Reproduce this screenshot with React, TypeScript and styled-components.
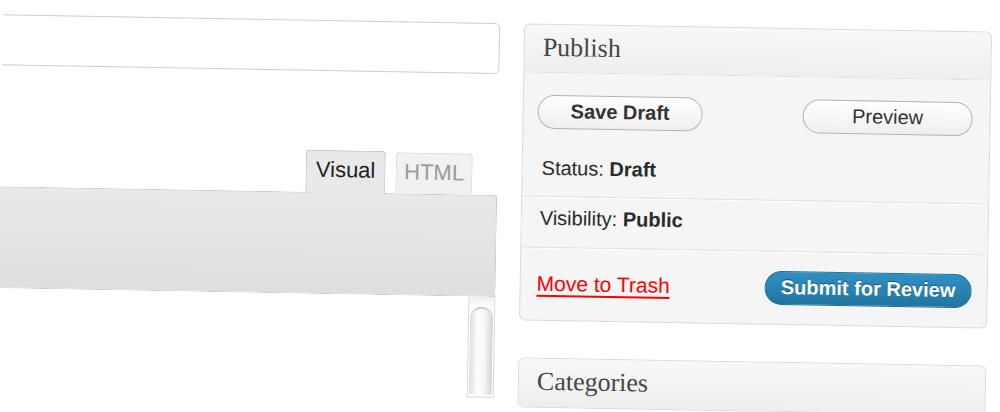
import React from 'react';
import styled, { createGlobalStyle } from 'styled-components';

const GlobalStyle = createGlobalStyle`
  html, body {
    margin: 0;
    padding: 0;
    background: #fff;
    overflow: hidden;
  }
  body {
    font-family: "Liberation Sans", Arial, sans-serif;
    color: #333;
  }
`;

const Page = styled.div`
  width: 1000px;
  height: 412px;
  overflow: hidden;
  background: #fff;
  display: flex;
  align-items: flex-start;
  gap: 24px;
  transform: rotate(1deg);
  transform-origin: 500px 206px;
`;

const EditorColumn = styled.div`
  flex-shrink: 0;
  width: 527px;
  margin-left: -30px;
  display: flex;
  flex-direction: column;
`;

const TitleInput = styled.div`
  margin-top: 23px;
  height: 51px;
  box-sizing: border-box;
  border: 1px solid #cdcdcd;
  border-radius: 5px;
  background: #fff;
`;

const TabRow = styled.div`
  position: relative;
  z-index: 1;
  margin-top: 79px;
  margin-bottom: -1px;
  height: 43px;
  padding-right: 25px;
  display: flex;
  justify-content: flex-end;
  align-items: flex-end;
  gap: 10px;
`;

const Tab = styled.div<{ $active?: boolean }>`
  box-sizing: border-box;
  width: ${(p) => (p.$active ? '80px' : '77px')};
  height: ${(p) => (p.$active ? '43px' : '41px')};
  margin-bottom: ${(p) => (p.$active ? '0' : '1px')};
  border: 1px solid ${(p) => (p.$active ? '#c6c6c6' : '#dadada')};
  border-bottom: none;
  border-radius: 4px 4px 0 0;
  background: ${(p) => (p.$active ? '#e9e9e9' : '#f1f1f1')};
  color: ${(p) => (p.$active ? '#222' : '#9a9a9a')};
  font-size: 22px;
  line-height: 38px;
  text-align: center;
`;

const Toolbar = styled.div`
  height: 102px;
  box-sizing: border-box;
  border: 1px solid #c9c9c9;
  border-left: none;
  border-radius: 0 4px 0 0;
  background: linear-gradient(#e9e9e9, #dedede);
`;

const EditorBody = styled.div`
  display: flex;
  justify-content: flex-end;
  height: 115px;
  background: #fff;
`;

const ScrollTrack = styled.div`
  width: 27px;
  height: 101px;
  box-sizing: border-box;
  border-left: 1px solid #dadada;
  border-right: 1px solid #dadada;
  border-bottom: 1px dotted #c8c8c8;
  padding: 10px 1px 2px;
  background: linear-gradient(#ececec, #fff 10px);
  display: flex;
`;

const ScrollThumb = styled.div`
  flex: 1;
  border-radius: 12px 12px 2px 2px;
  border-top: 2px solid #c9c9c9;
  background: linear-gradient(90deg, #dedede, #fdfdfd 35%, #f6f6f6 65%, #d4d4d4);
`;

const SideColumn = styled.div`
  flex-shrink: 0;
  width: 468px;
  display: flex;
  flex-direction: column;
`;

const Box = styled.div<{ $gap: number }>`
  margin-top: ${(p) => p.$gap}px;
  border: 1px solid #dadada;
  border-radius: 6px;
  background: #f5f5f5;
`;

const BoxTitle = styled.div<{ $divided?: boolean }>`
  height: 48px;
  box-sizing: border-box;
  padding: 10px 0 0 18px;
  border-bottom: ${(p) => (p.$divided ? '1px solid #dfdfdf' : 'none')};
  border-radius: 6px 6px 0 0;
  background: linear-gradient(#f8f8f8, #eeeeee);
  font-family: "Liberation Serif", Georgia, serif;
  font-size: 26px;
  line-height: 26px;
  color: #464646;
`;

const ButtonRow = styled.div`
  display: flex;
  justify-content: space-between;
  padding: 22px 17px 0 14px;
`;

const PillButton = styled.div<{ $width: number; $bold?: boolean }>`
  width: ${(p) => p.$width}px;
  height: 34px;
  box-sizing: border-box;
  border: 1px solid #b4b4b4;
  border-radius: 17px;
  background: linear-gradient(#ffffff, #efefef);
  font-size: 20px;
  font-weight: ${(p) => (p.$bold ? 700 : 400)};
  line-height: 31px;
  text-align: center;
  color: #333;
`;

const InfoRow = styled.div<{ $top: number; $bottom: number; $left: number; $divided?: boolean }>`
  padding: ${(p) => `${p.$top}px 0 ${p.$bottom}px ${p.$left}px`};
  font-size: 20px;
  line-height: 24px;
  color: #2a2a2a;
  border-bottom: ${(p) => (p.$divided ? '1px solid #e1e1e1' : 'none')};
  box-shadow: ${(p) => (p.$divided ? '0 1px 0 #fff' : 'none')};

  b {
    font-weight: 700;
  }
`;

const ActionRow = styled.div`
  display: flex;
  justify-content: space-between;
  align-items: center;
  padding: 19px 15px 19px 16px;
`;

const TrashLink = styled.span`
  color: #ff0000;
  font-size: 21px;
  line-height: 24px;
  text-decoration: underline;
  text-decoration-thickness: 2px;
  text-underline-offset: 4px;
`;

const SubmitButton = styled.div`
  width: 207px;
  height: 34px;
  box-sizing: border-box;
  border: 1px solid #1f6f97;
  border-radius: 17px;
  background: linear-gradient(#3090c4, #21759f);
  color: #fff;
  font-size: 20px;
  font-weight: 700;
  line-height: 31px;
  text-align: center;
  text-shadow: 0 -1px 0 rgba(0, 0, 0, 0.45);
`;

const App: React.FC = () => {
  return (
    <>
      <GlobalStyle />
      <Page>
        <EditorColumn>
          <TitleInput />
          <TabRow>
            <Tab $active>Visual</Tab>
            <Tab>HTML</Tab>
          </TabRow>
          <Toolbar />
          <EditorBody>
            <ScrollTrack>
              <ScrollThumb />
            </ScrollTrack>
          </EditorBody>
        </EditorColumn>

        <SideColumn>
          <Box $gap={23}>
            <BoxTitle $divided>Publish</BoxTitle>
            <ButtonRow>
              <PillButton $width={165} $bold>Save Draft</PillButton>
              <PillButton $width={170}>Preview</PillButton>
            </ButtonRow>
            <InfoRow $top={27} $bottom={16} $left={19} $divided>
              Status: <b>Draft</b>
            </InfoRow>
            <InfoRow $top={9} $bottom={17} $left={18} $divided>
              Visibility: <b>Public</b>
            </InfoRow>
            <ActionRow>
              <TrashLink>Move to Trash</TrashLink>
              <SubmitButton>Submit for Review</SubmitButton>
            </ActionRow>
          </Box>

          <Box $gap={37}>
            <BoxTitle>Categories</BoxTitle>
          </Box>
        </SideColumn>
      </Page>
    </>
  );
};

export default App;
